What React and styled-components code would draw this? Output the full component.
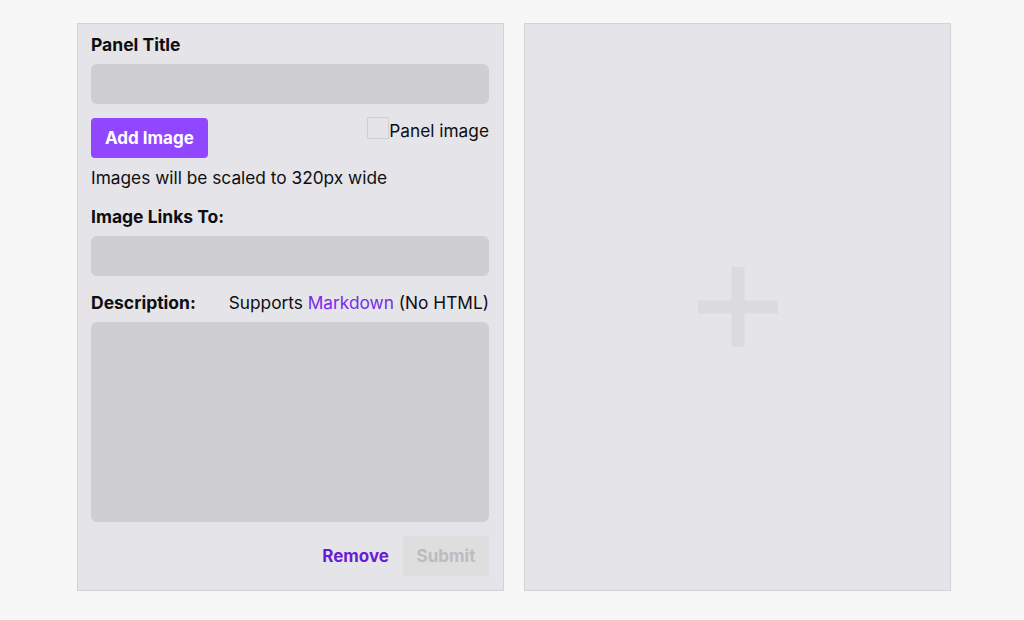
import React from "react";
import styled, { createGlobalStyle } from "styled-components";

const Global = createGlobalStyle`
  html, body { margin: 0; padding: 0; background: #f7f7f8; }
  body { font-family: Inter, "Noto Sans", sans-serif; color: #0e0e10; }
  * { box-sizing: border-box; }
`;

const Page = styled.div`
  display: flex;
  gap: 20px;
  padding: 23px 0 0 77px;
  height: 620px;
`;

const Panel = styled.div`
  width: 427px;
  height: 568px;
  border: 1px solid #d3d3d7;
  background: #e5e4e9;
`;

const Form = styled(Panel)`
  display: flex;
  flex-direction: column;
  padding: 11px 14px 14px 13px;
`;

const Label = styled.div`
  font-size: 17.5px;
  font-weight: 700;
  line-height: 20px;
  margin-top: ${(p) => p.$mt || 0}px;
  margin-bottom: ${(p) => p.$mb ?? 9}px;
`;

const Field = styled.div`
  height: ${(p) => p.$h || 40}px;
  border-radius: 6px;
  background: #cfcfd2;
  margin-top: ${(p) => p.$mt || 0}px;
`;

const Row = styled.div`
  display: flex;
  justify-content: space-between;
  align-items: ${(p) => p.$align || "flex-start"};
  margin-top: ${(p) => p.$mt || 0}px;
`;

const PrimaryButton = styled.button`
  height: 40px;
  padding: 0 14px;
  border: none;
  border-radius: 4px;
  background: #9147ff;
  color: #fff;
  font-family: Inter, sans-serif;
  font-size: 17px;
  font-weight: 700;
`;

const CheckLabel = styled.label`
  display: flex;
  align-items: flex-start;
  font-size: 17.3px;
  line-height: 28px;
  margin-top: -1px;
`;

const Box = styled.span`
  width: 22px;
  height: 22px;
  border: 1px solid #d0d0d4;
  background: #e5e4e9;
`;

const Text = styled.div`
  font-size: 17.3px;
  line-height: 20px;
  margin-top: ${(p) => p.$mt || 0}px;
`;

const Link = styled.span`
  color: #772ce8;
`;

const Footer = styled.div`
  display: flex;
  justify-content: flex-end;
  align-items: center;
  gap: 14px;
  margin-top: auto;
`;

const TextButton = styled.button`
  border: none;
  background: none;
  padding: 0;
  color: #6a1cd2;
  font-family: Inter, sans-serif;
  font-size: 17px;
  font-weight: 700;
`;

const DisabledButton = styled.button`
  height: 40px;
  width: 86px;
  border: none;
  border-radius: 4px;
  background: #dededf;
  color: #bcbcc0;
  font-family: Inter, sans-serif;
  font-size: 17px;
  font-weight: 700;
`;

const Preview = styled(Panel)`
  display: flex;
  align-items: center;
  justify-content: center;
`;

const Plus = () => (
  <svg width="80" height="80" viewBox="0 0 80 80">
    <rect x="33.5" y="0" width="13" height="80" fill="#dadadf" />
    <rect x="0" y="33.5" width="80" height="13" fill="#dadadf" />
  </svg>
);

export default function App() {
  return (
    <>
      <Global />
      <Page>
        <Form>
          <Label>Panel Title</Label>
          <Field />
          <Row $mt={14}>
            <PrimaryButton>Add Image</PrimaryButton>
            <CheckLabel>
              <Box />
              Panel image
            </CheckLabel>
          </Row>
          <Text $mt={10}>Images will be scaled to 320px wide</Text>
          <Label $mt={19}>Image Links To:</Label>
          <Field />
          <Row $mt={17} $align="baseline">
            <Label $mb={0}>Description:</Label>
            <Text>
              Supports <Link>Markdown</Link> (No HTML)
            </Text>
          </Row>
          <Field $h={200} $mt={9} />
          <Footer>
            <TextButton>Remove</TextButton>
            <DisabledButton>Submit</DisabledButton>
          </Footer>
        </Form>
        <Preview>
          <Plus />
        </Preview>
      </Page>
    </>
  );
}
